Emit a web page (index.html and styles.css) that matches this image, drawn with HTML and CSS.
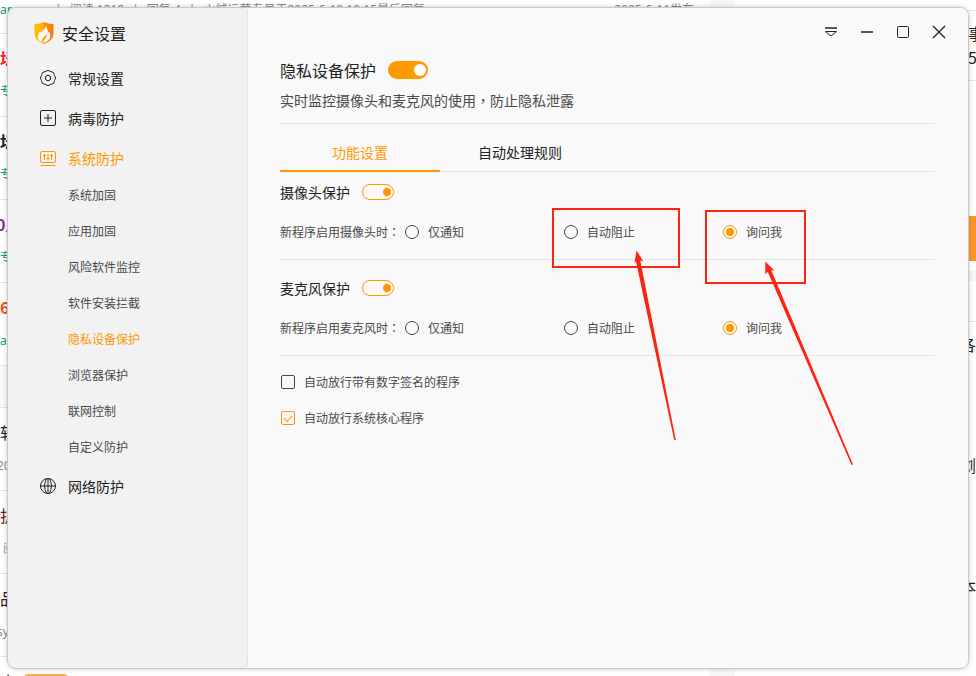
FILE: index.html
```html
<!DOCTYPE html>
<html lang="zh-CN">
<head>
    <meta charset="UTF-8">
    <meta name="viewport" content="width=device-width, initial-scale=1.0">
    <title>安全设置</title>
    <link rel="stylesheet" href="styles.css">
</head>
<body>
    <!-- forum page behind the window -->
    <div class="forum">
        <div class="topics">
            <div class="topic first">
                <div class="meta">
                    <span class="author green">ar</span>
                    <span>|</span>
                    <span>阅读 1218</span>
                    <span>|</span>
                    <span>回复 4</span>
                    <span>|</span>
                    <span>火绒运营专员于2025-6-10 10:15最后回复</span>
                    <span class="date">2025-6-11发布</span>
                </div>
            </div>
            <div class="topic"><div class="subject red">坛</div><div class="meta green">专</div></div>
            <div class="topic"><div class="subject">坛</div><div class="meta green">专</div></div>
            <div class="topic"><div class="subject purple">0周</div><div class="meta green">专</div></div>
            <div class="topic"><div class="subject orange">6</div><div class="meta green">a</div></div>
            <div class="topic-gap"></div>
            <div class="topic"><div class="subject plain">软</div><div class="meta grey">20</div></div>
            <div class="topic"><div class="subject plain wine">护</div><div class="meta blue">阅</div></div>
            <div class="topic"><div class="subject plain">品</div><div class="meta grey">sy</div></div>
            <div class="topic"><div class="subject plain">小<span class="pill"></span></div></div>
        </div>
        <div class="aside">
            <div class="aside-card aside-head"></div>
            <div class="aside-card aside-info">事<br>5</div>
            <div class="aside-card aside-post"><span class="post-bar"></span></div>
            <div class="aside-gap"></div>
            <div class="aside-card aside-title"></div>
            <div class="aside-card aside-list"><span>各</span><span>浏</span><span>本</span></div>
        </div>
    </div>

    <div class="window">
        <aside class="sidebar">
            <div class="brand">
                <svg class="brand-icon" width="20" height="22" viewBox="0 0 20 22">
                    <defs>
                        <linearGradient id="shield" x1="0" y1="0" x2="1" y2="0">
                            <stop offset="0" stop-color="#ffc107"/>
                            <stop offset="0.5" stop-color="#ffb000"/>
                            <stop offset="0.51" stop-color="#ff8a10"/>
                            <stop offset="1" stop-color="#ff7a08"/>
                        </linearGradient>
                    </defs>
                    <path d="M10 0 Q14 2 19.500 2 V12 Q19.500 18.500 10 22 Q.5 18.500 .5 12 V2 Q6 2 10 0Z" fill="url(#shield)"/>
                    <path d="M11.500 4 Q11.800 6.500 9 8.500 Q7.800 9.500 7.800 11 Q6.500 10.500 6.500 9 Q3 13 4.200 16.500 Q5.200 19.500 7.500 20.500 Q6.800 18 9 16 Q12 13.500 12.500 11.800 Q13.500 14 11.300 16.500 Q9 19 9.700 21 Q15.500 19 16.200 14.500 Q16.500 11.500 14.800 9.300 Q14.500 10.500 13.700 11 Q14 6.500 11.500 4Z" fill="#fff"/>
                </svg>
                <span>安全设置</span>
            </div>
            <nav>
                <a href="#" class="nav-item">
                    <svg width="16" height="16" viewBox="0 0 16 16">
                        <path d="M6 1.200 Q8 -.4 10 1.200 Q10.900 1.900 12 1.900 Q14.200 2.200 14.200 4.400 Q14.200 5.300 14.900 6.100 Q16.100 8 14.900 9.900 Q14.200 10.700 14.200 11.600 Q14.200 13.800 12 14.100 Q10.900 14.100 10 14.800 Q8 16.400 6 14.800 Q5.100 14.100 4 14.100 Q1.800 13.800 1.800 11.600 Q1.800 10.700 1.100 9.900 Q-.1 8 1.100 6.100 Q1.800 5.300 1.800 4.400 Q1.800 2.200 4 1.900 Q5.100 1.900 6 1.200Z"/>
                        <circle cx="8" cy="8" r="2.700"/>
                    </svg>
                    <span>常规设置</span>
                </a>
                <a href="#" class="nav-item">
                    <svg width="16" height="16" viewBox="0 0 16 16">
                        <rect x=".5" y=".5" width="15" height="15" rx="1.500"/>
                        <path d="M8 4v8M4 8h8"/>
                    </svg>
                    <span>病毒防护</span>
                </a>
                <a href="#" class="nav-item active">
                    <svg width="16" height="16" viewBox="0 0 16 16">
                        <rect x=".5" y="1.500" width="15" height="11" rx="1.500"/>
                        <path d="M.5 15.500h15M4.500 4v6M8 4v6M11.500 4v6M3 5.500h3M6.500 8.500h3M10 5.500h3"/>
                    </svg>
                    <span>系统防护</span>
                </a>
                <div class="sub-nav">
                    <a href="#">系统加固</a>
                    <a href="#">应用加固</a>
                    <a href="#">风险软件监控</a>
                    <a href="#">软件安装拦截</a>
                    <a href="#" class="active">隐私设备保护</a>
                    <a href="#">浏览器保护</a>
                    <a href="#">联网控制</a>
                    <a href="#">自定义防护</a>
                </div>
                <a href="#" class="nav-item">
                    <svg width="16" height="16" viewBox="0 0 16 16">
                        <circle cx="8" cy="8" r="7.500"/>
                        <path d="M.5 8h15M8 .5v15M6.500 .8Q2.600 8 6.500 15.200M9.500 .8Q13.400 8 9.500 15.200"/>
                    </svg>
                    <span>网络防护</span>
                </a>
            </nav>
        </aside>

        <main class="content">
            <div class="titlebar">
                <button type="button" aria-label="菜单">
                    <svg width="14" height="14" viewBox="0 0 14 14"><path d="M1 3h12" stroke-width="1.500"/><path d="M1.500 6.500h11L7 11Z"/></svg>
                </button>
                <button type="button" aria-label="最小化">
                    <svg width="14" height="14" viewBox="0 0 14 14"><path d="M1 7h12" stroke-width="1.500"/></svg>
                </button>
                <button type="button" aria-label="最大化">
                    <svg width="14" height="14" viewBox="0 0 14 14"><rect x="1.500" y="1.500" width="11" height="11" rx="1"/></svg>
                </button>
                <button type="button" aria-label="关闭">
                    <svg width="14" height="14" viewBox="0 0 14 14"><path d="M1 1l12 12M13 1L1 13" stroke-width="1.300"/></svg>
                </button>
            </div>

            <div class="page">
                <div class="page-head">
                    <label for="privacy">隐私设备保护</label>
                    <input type="checkbox" id="privacy" class="switch" checked>
                </div>
                <p class="desc">实时监控摄像头和麦克风的使用<span class="mark" lang="zh-TW">，</span>防止隐私泄露</p>

                <div class="tabs">
                    <button type="button" class="tab active">功能设置</button>
                    <button type="button" class="tab">自动处理规则</button>
                </div>

                <section class="section">
                    <div class="section-head">
                        <label for="camera">摄像头保护</label>
                        <input type="checkbox" id="camera" class="switch-small" checked>
                    </div>
                    <div class="options">
                        <span class="options-label">新程序启用摄像头时<span class="mark" lang="zh-TW">：</span></span>
                        <label class="option"><input type="radio" name="camera">仅通知</label>
                        <label class="option"><input type="radio" name="camera">自动阻止</label>
                        <label class="option"><input type="radio" name="camera" checked>询问我</label>
                    </div>
                </section>

                <section class="section">
                    <div class="section-head">
                        <label for="mic">麦克风保护</label>
                        <input type="checkbox" id="mic" class="switch-small" checked>
                    </div>
                    <div class="options">
                        <span class="options-label">新程序启用麦克风时<span class="mark" lang="zh-TW">：</span></span>
                        <label class="option"><input type="radio" name="mic">仅通知</label>
                        <label class="option"><input type="radio" name="mic">自动阻止</label>
                        <label class="option"><input type="radio" name="mic" checked>询问我</label>
                    </div>
                </section>

                <div class="checks">
                    <label class="check"><input type="checkbox">自动放行带有数字签名的程序</label>
                    <label class="check"><input type="checkbox" checked>自动放行系统核心程序</label>
                </div>
            </div>
        </main>
    </div>

    <!-- red marks -->
    <svg class="marks" width="860" height="480" viewBox="0 0 860 480">
        <rect x="553" y="209" width="126" height="58"/>
        <rect x="706" y="211" width="99" height="72"/>
        <path d="M636.500 250.500L643.500 261.500L640.300 260.500L675.800 440H674.200L636 261.500L634.500 262.500Z"/>
        <path d="M765.300 261.500L774.500 270.500L771.300 270.200L853 464.500L851.500 465L767.800 272L765.300 274Z"/>
    </svg>
</body>
</html>
```

FILE: styles.css
```css
* {
    box-sizing: border-box;
}

body {
    margin: 0;
    position: relative;
    display: flex;
    min-height: 100vh;
    padding: 7px;
    background-color: #fff;
    color: #222;
    font-family: "Noto Sans CJK SC", sans-serif;
    font-size: 12px;
    line-height: 20px;
}

a {
    color: inherit;
    text-decoration: none;
}

button {
    padding: 0;
    border: none;
    background: none;
    color: inherit;
    font: inherit;
    cursor: pointer;
}

svg {
    display: block;
    fill: none;
    stroke: currentColor;
}

/* Forum page */
.forum {
    position: absolute;
    inset: 0;
    display: flex;
    gap: 25px;
    overflow: hidden;
    background-color: #f7f7f7;
}

.topics {
    flex: 0 0 710px;
}

.topic {
    height: 83px;
    padding-top: 10px;
    border-bottom: 1px solid #e5e5e5;
    background-color: #fff;
    overflow: hidden;
}

.topic.first {
    height: 34px;
    padding-top: 0;
}

.first .meta {
    display: flex;
    gap: 8px;
    padding-right: 16px;
}

.first .author {
    width: 47px;
}

.first .date {
    margin-left: auto;
}

.subject {
    display: flex;
    align-items: center;
    gap: 8px;
    height: 28px;
    font-size: 16px;
    font-weight: bold;
    white-space: nowrap;
}

.subject.plain {
    font-weight: normal;
}

.topic .meta {
    height: 20px;
    margin-top: 10px;
    color: #888;
    font-family: "Noto Sans", "Noto Sans CJK SC", sans-serif;
    white-space: nowrap;
}

.topic.first .meta {
    margin-top: 0;
}

.pill {
    width: 44px;
    height: 14px;
    border: 2px solid #fdb040;
    border-radius: 4px;
}

.topic .green {
    color: #0a9d6c;
}

.topic .grey {
    margin-left: -3px;
}

.topic .blue {
    padding-left: 3px;
    color: #8a8fc0;
}

.red {
    color: #f5222d;
}

.purple {
    margin-left: -4px;
    color: #8e2a9b;
}

.orange {
    color: #f4511e;
}

.wine {
    color: #5a1a24;
}

.topic-gap {
    height: 42px;
    border-bottom: 1px solid #e5e5e5;
    background-color: #fafafa;
}

.aside {
    flex: 1;
}

.aside-card {
    padding-left: 233px;
    background-color: #fff;
    font-size: 16px;
    overflow: hidden;
}

.aside-head {
    height: 11px;
    border-bottom: 1px solid #e5e5e5;
}

.aside-info {
    height: 70px;
    padding-top: 10px;
    border-bottom: 1px solid #e5e5e5;
    line-height: 24px;
}

.aside-post {
    height: 190px;
    padding-top: 135px;
}

.post-bar {
    display: block;
    height: 45px;
    background-color: #ff9429;
}

.aside-gap {
    height: 10px;
}

.aside-title {
    height: 41px;
    border-bottom: 1px solid #e5e5e5;
}

.aside-list {
    display: flex;
    flex-direction: column;
    gap: 97px;
    height: 354px;
    padding-top: 10px;
    padding-left: 225px;
    line-height: 24px;
}

/* Settings window */
.window {
    position: relative;
    flex: 1;
    display: flex;
    border: 1px solid #c9c9c9;
    border-radius: 9px;
    background-color: #f9f9f9;
    box-shadow: 0 0 5px rgba(0, 0, 0, 0.2);
    overflow: hidden;
}

.sidebar {
    flex: 0 0 239px;
    border-radius: 8px;
    background-color: #f2f2f2;
    box-shadow: 0 0 2px #ccc;
}

.brand {
    display: flex;
    align-items: center;
    gap: 8px;
    height: 50px;
    padding-left: 26px;
    font-size: 16px;
}

.brand-icon {
    stroke: none;
}

.nav-item {
    display: flex;
    align-items: center;
    gap: 12px;
    height: 40px;
    padding-left: 32px;
    font-size: 14px;
}

.sub-nav a {
    display: block;
    padding-bottom: 2px;
    padding-left: 60px;
    color: #4a4a4a;
    line-height: 34px;
}

.nav-item.active,
.sub-nav .active {
    color: #ff9900;
}

.content {
    flex: 1;
    border-left: 1px solid #e5e5e5;
    background-color: #f9f9f9;
}

.titlebar {
    display: flex;
    justify-content: flex-end;
    height: 48px;
    padding-right: 11px;
}

.titlebar button {
    display: flex;
    align-items: center;
    justify-content: center;
    width: 36px;
}

.page {
    padding: 2px 33px 32px 32px;
}

.page-head {
    display: flex;
    align-items: center;
    gap: 12px;
    height: 24px;
    font-size: 16px;
}

.desc {
    margin: 0;
    padding: 8px 0 13px;
    border-bottom: 1px solid #e6e6e6;
    color: #4a4a4a;
    font-size: 14px;
}

/* punctuation centred in its cell */
.mark {
    font-family: "Noto Sans CJK TC", sans-serif;
}

.tabs {
    display: flex;
    height: 48px;
    box-shadow: inset 0 -1px #e6e6e6;
}

.tab {
    width: 160px;
    padding-top: 10px;
    border-bottom: 2px solid transparent;
    font-size: 14px;
}

.tab.active {
    border-color: #ff9900;
    color: #ff9900;
}

.section {
    padding: 10px 0 17px;
    border-bottom: 1px solid #e6e6e6;
}

.section + .section {
    padding-top: 18px;
}

.section-head {
    display: flex;
    align-items: center;
    gap: 12px;
    margin-bottom: 20px;
    font-size: 14px;
}

.options {
    display: flex;
    color: #4a4a4a;
}

.options-label {
    width: 125px;
}

.option {
    display: flex;
    align-items: center;
    gap: 9px;
    width: 159px;
}

.checks {
    display: flex;
    flex-direction: column;
    gap: 16px;
    padding: 16px 0 0 1px;
    color: #4a4a4a;
}

.check {
    display: flex;
    align-items: center;
    gap: 9px;
}

/* Switches, radios and tick boxes */
input {
    appearance: none;
    margin: 0;
    cursor: pointer;
}

.switch {
    display: flex;
    align-items: center;
    width: 40px;
    height: 18px;
    padding: 2px;
    border-radius: 9px;
    background-color: #ccc;
}

.switch::before {
    content: "";
    width: 12px;
    height: 12px;
    border-radius: 50%;
    background-color: #fff;
}

.switch:checked {
    justify-content: flex-end;
    background-color: #ff9900;
}

.switch-small {
    display: flex;
    align-items: center;
    width: 32px;
    height: 16px;
    padding: 2px;
    border: 1px solid #999;
    border-radius: 8px;
}

.switch-small::before {
    content: "";
    width: 8px;
    height: 8px;
    border-radius: 50%;
    background-color: #999;
}

.switch-small:checked {
    justify-content: flex-end;
    border-color: #ff9900;
}

.switch-small:checked::before {
    background-color: #ff9900;
}

.option input,
.check input {
    display: grid;
    place-items: center;
    width: 14px;
    height: 14px;
    border: 1px solid #444;
}

.option input {
    border-radius: 50%;
}

.check input {
    border-radius: 2px;
}

.option input:checked,
.check input:checked {
    border-color: #ff9900;
}

.option input:checked::before {
    content: "";
    width: 8px;
    height: 8px;
    border-radius: 50%;
    background-color: #ff9900;
}

.check input:checked::before {
    content: "";
    width: 7px;
    height: 4px;
    margin-bottom: 2px;
    border: solid #ff9900;
    border-width: 0 0 1px 1px;
    transform: rotate(-45deg);
}

/* Red marks over the window */
.marks {
    position: absolute;
    top: 0;
    left: 0;
    stroke: #fe2412;
    pointer-events: none;
}

.marks rect {
    stroke-width: 2;
}

.marks path {
    fill: #fe2412;
    stroke: none;
}
```
